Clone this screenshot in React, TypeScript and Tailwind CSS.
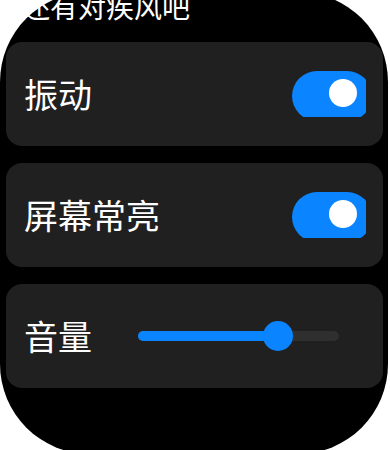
import React from 'react';

const font = { fontFamily: '"Noto Sans CJK SC", "Noto Sans", sans-serif' };

function Toggle() {
  return (
    <div className="w-[74px] h-[46px] overflow-hidden shrink-0">
      <div className="relative w-[80px] h-[50px] rounded-full bg-[#0a84ff]">
        <div className="absolute left-[37px] top-[8px] w-[28px] h-[28px] rounded-full bg-white" />
      </div>
    </div>
  );
}

function Slider({ value }: { value: number }) {
  return (
    <div className="relative w-[201px] h-[30px] flex items-center">
      <div className="w-full h-[10px] rounded-full bg-[#2f2f2f]">
        <div className="h-full rounded-full bg-[#0a84ff]" style={{ width: `${value}%` }} />
      </div>
      <div
        className="absolute top-0 w-[30px] h-[30px] -ml-[15px] rounded-full bg-[#0a84ff]"
        style={{ left: `${value}%` }}
      />
    </div>
  );
}

export default function App() {
  return (
    <div className="bg-white w-[390px] h-[450px] overflow-hidden" style={font}>
      <div className="-mt-[6px] w-[388px] h-[462px] rounded-[90px] bg-black pl-[6px] pr-[5px]">
        {/* title, scrolled mostly off the top */}
        <div className="-mt-[8px] pl-[16px] text-[28px] leading-[28px] text-white whitespace-nowrap">
          还有对疾风吧
        </div>

        <div className="mt-[22px] flex flex-col gap-[17px]">
          <div className="h-[104px] rounded-[16px] bg-[#202020] flex items-center justify-between pl-[18px] pr-[17px]">
            <span className="text-[34px] leading-none text-white">振动</span>
            <Toggle />
          </div>

          <div className="h-[104px] rounded-[16px] bg-[#202020] flex items-center justify-between pl-[18px] pr-[17px]">
            <span className="text-[34px] leading-none text-white">屏幕常亮</span>
            <Toggle />
          </div>

          <div className="h-[104px] rounded-[16px] bg-[#202020] flex items-center pl-[18px] pr-[17px]">
            <span className="text-[34px] leading-none text-white">音量</span>
            <div className="ml-[46px]">
              <Slider value={69.5} />
            </div>
          </div>
        </div>
      </div>
    </div>
  );
}
